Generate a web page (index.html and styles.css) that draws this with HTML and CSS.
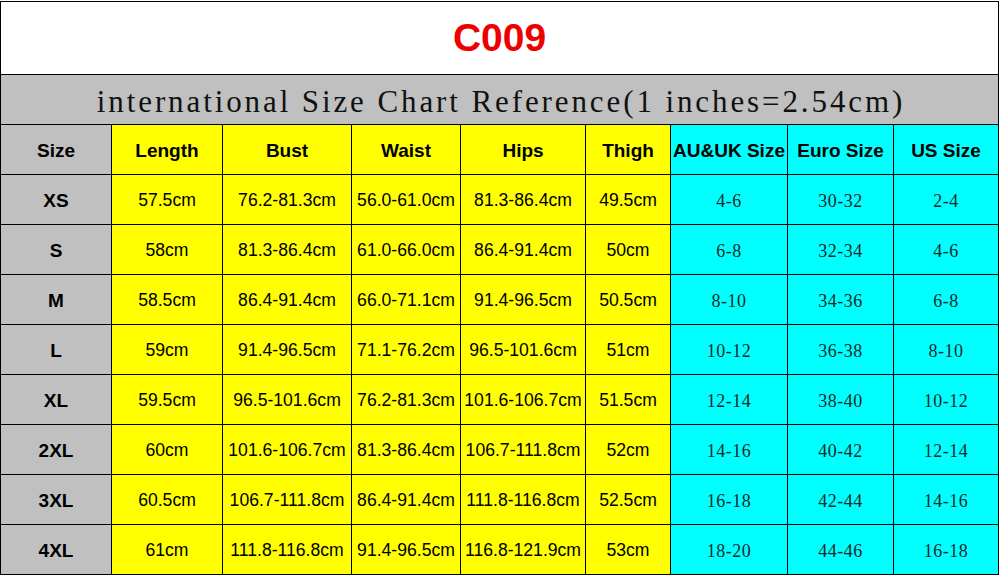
FILE: index.html
```html
<!DOCTYPE html>
<html>
<head>
<meta charset="utf-8">
<link rel="stylesheet" href="styles.css">
</head>
<body>
<div class="chart">
  <div class="title">C009</div>
  <div class="subtitle">international Size Chart Reference(1 inches=2.54cm)</div>

  <div class="c g h">Size</div>
  <div class="c y h">Length</div>
  <div class="c y h">Bust</div>
  <div class="c y h">Waist</div>
  <div class="c y h">Hips</div>
  <div class="c y h">Thigh</div>
  <div class="c b h">AU&amp;UK Size</div>
  <div class="c b h">Euro Size</div>
  <div class="c b h">US Size</div>

  <div class="c g h">XS</div>
  <div class="c y">57.5cm</div>
  <div class="c y">76.2-81.3cm</div>
  <div class="c y">56.0-61.0cm</div>
  <div class="c y">81.3-86.4cm</div>
  <div class="c y">49.5cm</div>
  <div class="c b s">4-6</div>
  <div class="c b s">30-32</div>
  <div class="c b s">2-4</div>

  <div class="c g h">S</div>
  <div class="c y">58cm</div>
  <div class="c y">81.3-86.4cm</div>
  <div class="c y">61.0-66.0cm</div>
  <div class="c y">86.4-91.4cm</div>
  <div class="c y">50cm</div>
  <div class="c b s">6-8</div>
  <div class="c b s">32-34</div>
  <div class="c b s">4-6</div>

  <div class="c g h">M</div>
  <div class="c y">58.5cm</div>
  <div class="c y">86.4-91.4cm</div>
  <div class="c y">66.0-71.1cm</div>
  <div class="c y">91.4-96.5cm</div>
  <div class="c y">50.5cm</div>
  <div class="c b s">8-10</div>
  <div class="c b s">34-36</div>
  <div class="c b s">6-8</div>

  <div class="c g h">L</div>
  <div class="c y">59cm</div>
  <div class="c y">91.4-96.5cm</div>
  <div class="c y">71.1-76.2cm</div>
  <div class="c y">96.5-101.6cm</div>
  <div class="c y">51cm</div>
  <div class="c b s">10-12</div>
  <div class="c b s">36-38</div>
  <div class="c b s">8-10</div>

  <div class="c g h">XL</div>
  <div class="c y">59.5cm</div>
  <div class="c y">96.5-101.6cm</div>
  <div class="c y">76.2-81.3cm</div>
  <div class="c y">101.6-106.7cm</div>
  <div class="c y">51.5cm</div>
  <div class="c b s">12-14</div>
  <div class="c b s">38-40</div>
  <div class="c b s">10-12</div>

  <div class="c g h">2XL</div>
  <div class="c y">60cm</div>
  <div class="c y">101.6-106.7cm</div>
  <div class="c y">81.3-86.4cm</div>
  <div class="c y">106.7-111.8cm</div>
  <div class="c y">52cm</div>
  <div class="c b s">14-16</div>
  <div class="c b s">40-42</div>
  <div class="c b s">12-14</div>

  <div class="c g h">3XL</div>
  <div class="c y">60.5cm</div>
  <div class="c y">106.7-111.8cm</div>
  <div class="c y">86.4-91.4cm</div>
  <div class="c y">111.8-116.8cm</div>
  <div class="c y">52.5cm</div>
  <div class="c b s">16-18</div>
  <div class="c b s">42-44</div>
  <div class="c b s">14-16</div>

  <div class="c g h">4XL</div>
  <div class="c y">61cm</div>
  <div class="c y">111.8-116.8cm</div>
  <div class="c y">91.4-96.5cm</div>
  <div class="c y">116.8-121.9cm</div>
  <div class="c y">53cm</div>
  <div class="c b s">18-20</div>
  <div class="c b s">44-46</div>
  <div class="c b s">16-18</div>
</div>
</body>
</html>
```
FILE: styles.css
```css
html, body {
  margin: 0;
  padding: 0;
  background: #ffffff;
}
body {
  padding-top: 1px;
}
.chart {
  width: 999px;
  box-sizing: border-box;
  padding: 1px;
  background: #000000;
  display: grid;
  grid-template-columns: 110px 110px 128px 108px 124px 84px 116px 105px 104px;
  grid-template-rows: 72px 49px repeat(9, 49px);
  gap: 1px;
  font-family: "Liberation Sans", Arial, sans-serif;
  color: #000;
}
.title {
  grid-column: 1 / -1;
  background: #ffffff;
  color: #ee0000;
  font-weight: bold;
  font-size: 39px;
  display: flex;
  align-items: center;
  justify-content: center;
}
.subtitle {
  grid-column: 1 / -1;
  background: #c0c0c0;
  font-family: "Liberation Serif", "Times New Roman", serif;
  font-size: 31px;
  letter-spacing: 2.9px;
  color: #111;
  display: flex;
  align-items: center;
  justify-content: center;
  white-space: pre;
  padding-top: 4px;
  padding-left: 3px;
  box-sizing: border-box;
}
.c {
  display: flex;
  align-items: center;
  justify-content: center;
  white-space: nowrap;
  font-size: 17.6px;
  padding-top: 2px;
  box-sizing: border-box;
}
.g { background: #c0c0c0; }
.y { background: #ffff00; }
.b { background: #00ffff; }
.h {
  font-weight: bold;
  font-size: 19px;
}
.s {
  font-family: "Liberation Serif", "Times New Roman", serif;
  font-size: 18px;
  color: #1a2a2a;
  letter-spacing: 0.5px;
  padding-top: 4px;
}
```
